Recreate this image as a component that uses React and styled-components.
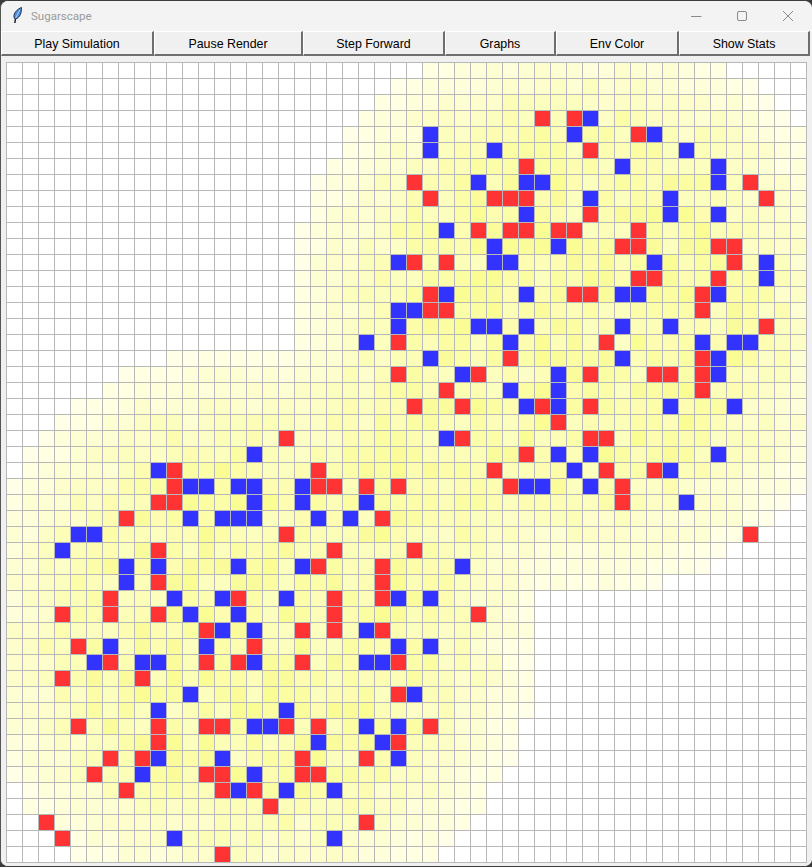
import React from "react";
import styled, { createGlobalStyle } from "styled-components";

const GlobalStyle = createGlobalStyle`
  html, body {
    margin: 0;
    padding: 0;
    background: #3c3c3c;
  }
`;

const RED = {
  3: [33, 35], 4: [39], 5: [36], 6: [32], 7: [25, 46], 8: [26, 30, 31, 32, 47], 9: [36],
  10: [29, 31, 32, 34, 35, 39], 11: [38, 39, 44, 45], 12: [25, 27, 45], 13: [39, 40, 44],
  14: [26, 35, 36, 43], 15: [26, 27, 43], 16: [47], 17: [24, 37], 18: [31, 43],
  19: [24, 29, 36, 40, 41, 43], 20: [27, 43], 21: [25, 28, 33, 36], 22: [34], 23: [17, 28, 36, 37],
  24: [32], 25: [10, 19, 30, 37, 40], 26: [10, 19, 20, 22, 24, 31, 38], 27: [9, 10, 38], 28: [7, 23],
  29: [17, 46], 30: [9, 20, 25], 31: [19, 23], 32: [9, 23], 33: [6, 14, 20, 23], 34: [3, 6, 9, 20, 29],
  35: [12, 18, 20, 23], 36: [4, 15], 37: [6, 12, 14, 18, 24], 38: [3, 8], 39: [24],
  41: [4, 9, 12, 13, 17, 19, 26], 42: [9, 24], 43: [6, 8, 18, 22], 44: [5, 12, 13, 18, 19],
  45: [7, 13, 15], 46: [16], 47: [2, 22], 48: [3], 49: [13],
};

const BLUE = {
  3: [36], 4: [26, 35, 40], 5: [26, 30, 42], 6: [38, 44], 7: [29, 32, 33, 44], 8: [36, 41],
  9: [32, 41, 44], 10: [27], 11: [30, 34], 12: [24, 30, 31, 40, 47], 13: [47], 14: [27, 32, 38, 39, 44],
  15: [24, 25], 16: [24, 29, 30, 32, 38, 41], 17: [22, 31, 43, 45, 46], 18: [26, 38, 44], 19: [28, 34, 44],
  20: [31, 34], 21: [32, 34, 41, 45], 23: [27], 24: [15, 34, 36, 44], 25: [9, 35, 41],
  26: [11, 12, 14, 15, 18, 32, 33, 36], 27: [15, 18, 22, 42], 28: [11, 13, 14, 15, 19, 21], 29: [4, 5],
  30: [3], 31: [7, 9, 14, 18, 28], 32: [7], 33: [10, 13, 17, 24, 26], 34: [11, 14], 35: [13, 15, 22],
  36: [6, 12, 24, 26], 37: [5, 8, 9, 15, 22, 23], 39: [11, 25], 40: [9, 17], 41: [15, 16, 22, 24],
  42: [19, 23], 43: [9, 13, 24], 44: [8, 15], 45: [14, 17, 20], 48: [10, 20],
};

const BUTTONS = [
  ["Play Simulation", 153],
  ["Pause Render", 149],
  ["Step Forward", 142],
  ["Graphs", 111],
  ["Env Color", 123],
  ["Show Stats", 131],
];

const noise = (x, y) => {
  const s = Math.sin(x * 127.1 + y * 311.7) * 43758.5453;
  return s - Math.floor(s);
};

// sugar level of a cell: two round hills, -1 means bare ground
const levelAt = (x, y) => {
  const d1 = Math.hypot(x - 35, y - 15);
  const d2 = Math.hypot(x - 15, y - 35);
  if (Math.min(d1, d2) > 17.9) return -1;
  const hill = Math.max(0, 1 - d1 / 18) + Math.max(0, 1 - d2 / 18);
  const mean = Math.min(0.55, 1.3 * hill);
  const spread = 0.04 + 0.38 * Math.min(1, hill * 2);
  const t = mean + (noise(x, y) - 0.5) * spread;
  return Math.max(0, Math.min(16, Math.round(t * 16)));
};

const heatColor = (level) => {
  if (level < 0) return "#ffffff";
  const t = level / 16;
  const r = Math.round(255 - 7 * t);
  const g = Math.round(255 - 4 * t);
  const b = Math.round(232 - 112 * t);
  return `rgb(${r},${g},${b})`;
};

const cellColor = (x, y) => {
  if (RED[y]?.includes(x)) return "#ff3333";
  if (BLUE[y]?.includes(x)) return "#3333ff";
  return heatColor(levelAt(x, y));
};

const Window = styled.div`
  box-sizing: border-box;
  width: 812px;
  height: 867px;
  background: #f0f0f0;
  border-top: 1px solid #3c3c3c;
  border-left: 1px solid #555555;
  border-radius: 8px 8px 8px 8px;
  border-bottom: 1px solid #3c3c3c;
  display: flex;
  flex-direction: column;
  overflow: hidden;
`;

const TitleBar = styled.div`
  height: 30px;
  flex: none;
  display: flex;
  align-items: center;
  background: #f3f3f3;
  padding-left: 12px;
`;

const AppIcon = styled.svg`
  width: 10px;
  height: 17px;
  flex: none;
  margin-bottom: 1px;
`;

const Title = styled.span`
  margin-left: 8px;
  font-family: Roboto, "Noto Sans", sans-serif;
  font-size: 11.5px;
  color: #9a9a9a;
`;

const Controls = styled.div`
  margin-left: auto;
  padding-right: 18px;
  display: flex;
  align-items: center;
  gap: 34px;
`;

const ControlIcon = styled.svg`
  width: 12px;
  height: 12px;
  display: block;
  fill: none;
  stroke: #8a8a8a;
  stroke-width: 1;
`;

const Toolbar = styled.div`
  flex: none;
  display: flex;
  height: 25px;
`;

const ToolButton = styled.button`
  box-sizing: border-box;
  width: ${(p) => p.$width}px;
  flex: none;
  height: 25px;
  padding: 1px 0 0;
  background: #f0f0f0;
  border-style: solid;
  border-width: 1px 2px 2px 1px;
  border-color: #ffffff #6e6e6e #6e6e6e #ffffff;
  font-family: "Liberation Sans", Arial, sans-serif;
  font-size: 12.4px;
  color: #000000;
`;

const Content = styled.div`
  flex: 1;
  padding: 6px 0 0 5px;
  background: #f0f0f0;
`;

const Board = styled.div`
  width: 801px;
  height: 801px;
  box-sizing: border-box;
  display: grid;
  grid-template-columns: repeat(50, 15px);
  grid-auto-rows: 15px;
  gap: 1px;
  padding: 1px;
  background: #b8b8b8;
`;

const Cell = styled.div`
  background: ${(p) => p.$color};
`;

export default function App() {
  const cells = [];
  for (let y = 0; y < 50; y++) {
    for (let x = 0; x < 50; x++) {
      cells.push(<Cell key={`${x}-${y}`} $color={cellColor(x, y)} />);
    }
  }

  return (
    <>
      <GlobalStyle />
      <Window>
        <TitleBar>
          <AppIcon viewBox="0 0 10 17">
            <path d="M1.8 16 L2.6 11" stroke="#000" strokeWidth="1.3" fill="none" />
            <path d="M2.2 12.2 C-0.4 10 0.6 4 8.4 0.4 C8.6 5 7.6 10.5 2.2 12.2 Z" fill="#4c8ddc" stroke="#14233c" strokeWidth="0.9" />
            <path d="M2.6 11 L6.8 3" stroke="#c4e0ff" strokeWidth="0.8" fill="none" />
          </AppIcon>
          <Title>Sugarscape</Title>
          <Controls>
            <ControlIcon viewBox="0 0 12 12">
              <path d="M1 6.5 H11.5" />
            </ControlIcon>
            <ControlIcon viewBox="0 0 12 12">
              <rect x="1.5" y="1.5" width="9" height="9" rx="1.5" />
            </ControlIcon>
            <ControlIcon viewBox="0 0 12 12">
              <path d="M1 1 L11 11 M11 1 L1 11" />
            </ControlIcon>
          </Controls>
        </TitleBar>
        <Toolbar>
          {BUTTONS.map(([label, width]) => (
            <ToolButton key={label} $width={width}>{label}</ToolButton>
          ))}
        </Toolbar>
        <Content>
          <Board>{cells}</Board>
        </Content>
      </Window>
    </>
  );
}
